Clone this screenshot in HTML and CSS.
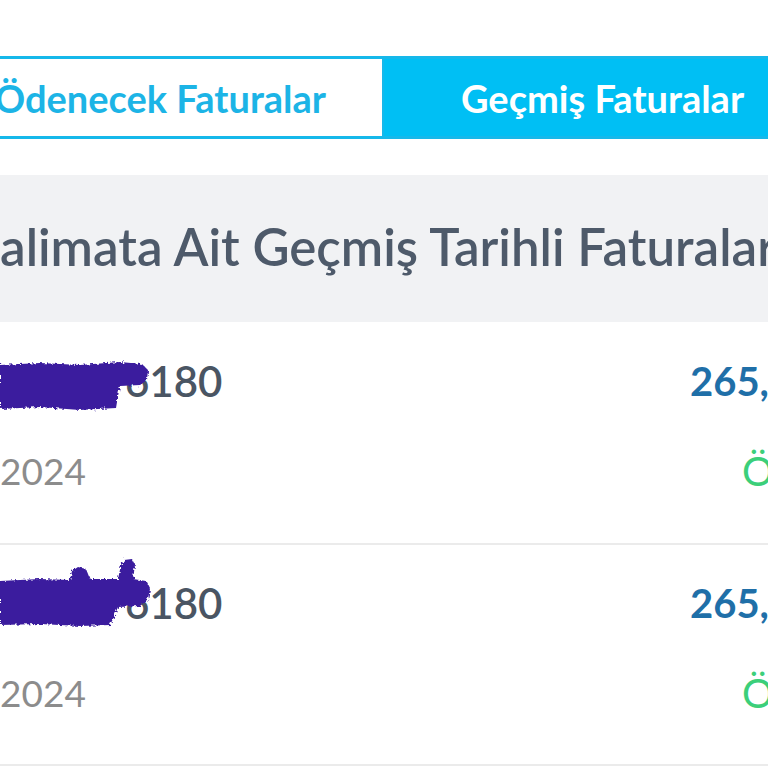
FILE: index.html
```html
<!DOCTYPE html>
<html lang="tr">
<head>
<meta charset="utf-8">
<link rel="stylesheet" href="styles.css">
</head>
<body>
<svg class="defs" width="0" height="0" aria-hidden="true">
  <filter id="rough" x="-10%" y="-20%" width="120%" height="140%">
    <feTurbulence type="fractalNoise" baseFrequency="0.35" numOctaves="2" seed="3"/>
    <feDisplacementMap in="SourceGraphic" scale="5"/>
  </filter>
</svg>
<div class="page">
  <div class="tabs">
    <div class="tab tab-idle">Ödenecek Faturalar</div>
    <div class="tab tab-active">Geçmiş Faturalar</div>
  </div>
  <div class="heading">alimata Ait Geçmiş Tarihli Faturalar</div>
  <div class="row">
    <svg class="redact r1" width="156" height="56" viewBox="0 0 156 56"><path d="M0 5 L40 3 L80 5 L120 2 L142 4 L148 10 L147 20 L140 25 L120 26 L118 36 L116 48 L80 50 L40 47 L0 49 Z"/></svg>
    <div class="col-left">
      <div class="line1 no">6180</div>
      <div class="line2 date">2024</div>
    </div>
    <div class="col-right">
      <div class="line1 amount">265,</div>
      <div class="line2 status">Ö</div>
    </div>
  </div>
  <div class="row">
    <svg class="redact r2" width="156" height="74" viewBox="0 0 156 74"><path d="M0 24 L40 22 L70 23 L72 14 L78 10 L86 12 L90 22 L118 22 L121 8 L124 3 L132 2 L135 8 L133 22 L146 24 L150 32 L148 42 L140 49 L118 50 L114 60 L110 68 L80 69 L40 67 L0 68 Z"/></svg>
    <div class="col-left">
      <div class="line1 no">6180</div>
      <div class="line2 date">2024</div>
    </div>
    <div class="col-right">
      <div class="line1 amount">265,</div>
      <div class="line2 status">Ö</div>
    </div>
  </div>
</div>
</body>
</html>
```

FILE: styles.css
```css
html, body {
  margin: 0;
  padding: 0;
  background: #ffffff;
  overflow: hidden;
  width: 768px;
  height: 768px;
}
.defs {
  position: absolute;
}
.page {
  width: 768px;
  font-family: "Lato", "Liberation Sans", sans-serif;
}
.tabs {
  margin-top: 56px;
  display: flex;
  border-top: 3px solid #16b8ea;
  border-bottom: 3px solid #16b8ea;
  height: 77px;
}
.tab {
  width: 384px;
  display: flex;
  align-items: center;
  font-weight: 700;
  font-size: 38px;
  white-space: nowrap;
  box-sizing: border-box;
}
.tab-idle {
  color: #1cb4e6;
  background: #fff;
  border-right: 2px solid #16b8ea;
  justify-content: flex-end;
  padding-right: 56px;
}
.tab-active {
  color: #fff;
  background: #00bff4;
  padding-left: 77px;
}
.heading {
  margin-top: 36px;
  height: 147px;
  background: #f1f2f4;
  display: flex;
  align-items: center;
  white-space: nowrap;
  font-size: 51px;
  font-weight: 600;
  color: #4e5a6a;
  padding-bottom: 4px;
  box-sizing: border-box;
}
.row {
  position: relative;
  display: flex;
  height: 223px;
  border-bottom: 2px solid #ebebeb;
  white-space: nowrap;
  padding-top: 35px;
  box-sizing: border-box;
}
.row + .row {
  height: 221px;
  padding-top: 34px;
}
.col-left {
  flex: 1;
}
.col-right {
  width: 80px;
}
.line1 {
  height: 48px;
  line-height: 48px;
  font-size: 42px;
  font-weight: 600;
  color: #4a5563;
}
.line2 {
  margin-top: 44px;
  height: 44px;
  line-height: 44px;
  font-size: 37px;
  color: #8c8c8c;
}
.no {
  padding-left: 125px;
}
.redact {
  position: absolute;
  left: 0;
  fill: #3b1c9e;
  filter: url(#rough);
}
.r1 {
  top: 38px;
}
.r2 {
  top: 12px;
}
.amount {
  color: #1f6fa8;
  font-weight: 700;
  font-size: 40px;
  padding-left: 2px;
}
.status {
  color: #3ccf7a;
  font-size: 40px;
  padding-left: 54px;
}
```
